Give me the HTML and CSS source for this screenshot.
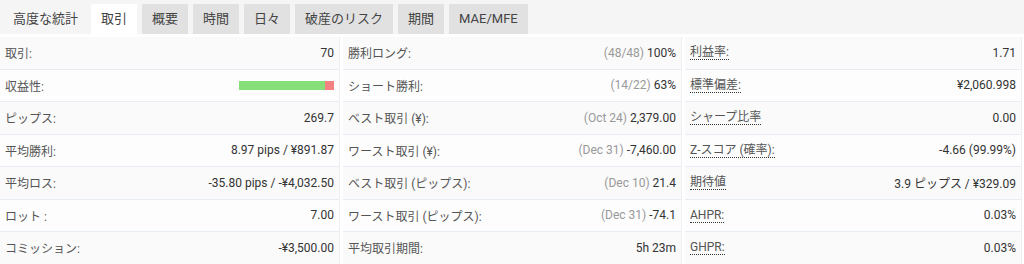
FILE: index.html
```html
<!DOCTYPE html>
<html lang="ja">
<head>
  <meta charset="UTF-8" />
  <title>高度な統計</title>
  <link rel="stylesheet" href="styles.css">
</head>
<body>
  <div class="tabs">
    <span class="title">高度な統計</span>
    <span class="tab active">取引</span>
    <span class="tab">概要</span>
    <span class="tab">時間</span>
    <span class="tab">日々</span>
    <span class="tab">破産のリスク</span>
    <span class="tab">期間</span>
    <span class="tab">MAE/MFE</span>
  </div>

  <div class="stats">
    <div class="col">
      <div class="row"><span class="label">取引:</span><span class="value">70</span></div>
      <div class="row"><span class="label">収益性:</span><span class="bar"><span class="win" style="width: 90%"></span><span class="loss"></span></span></div>
      <div class="row"><span class="label">ピップス:</span><span class="value">269.7</span></div>
      <div class="row"><span class="label">平均勝利:</span><span class="value">8.97 pips / ¥891.87</span></div>
      <div class="row"><span class="label">平均ロス:</span><span class="value">-35.80 pips / -¥4,032.50</span></div>
      <div class="row"><span class="label">ロット :</span><span class="value">7.00</span></div>
      <div class="row"><span class="label">コミッション:</span><span class="value">-¥3,500.00</span></div>
    </div>
    <div class="col">
      <div class="row"><span class="label">勝利ロング:</span><span class="value"><span class="muted">(48/48)</span> 100%</span></div>
      <div class="row"><span class="label">ショート勝利:</span><span class="value"><span class="muted">(14/22)</span> 63%</span></div>
      <div class="row"><span class="label">ベスト取引 (¥):</span><span class="value"><span class="muted">(Oct 24)</span> 2,379.00</span></div>
      <div class="row"><span class="label">ワースト取引 (¥):</span><span class="value"><span class="muted">(Dec 31)</span> -7,460.00</span></div>
      <div class="row"><span class="label">ベスト取引 (ピップス):</span><span class="value"><span class="muted">(Dec 10)</span> 21.4</span></div>
      <div class="row"><span class="label">ワースト取引 (ピップス):</span><span class="value"><span class="muted">(Dec 31)</span> -74.1</span></div>
      <div class="row"><span class="label">平均取引期間:</span><span class="value">5h 23m</span></div>
    </div>
    <div class="col">
      <div class="row"><span class="label dotted">利益率:</span><span class="value">1.71</span></div>
      <div class="row"><span class="label dotted">標準偏差:</span><span class="value">¥2,060.998</span></div>
      <div class="row"><span class="label dotted">シャープ比率</span><span class="value">0.00</span></div>
      <div class="row"><span class="label dotted">Z-スコア (確率):</span><span class="value">-4.66 (99.99%)</span></div>
      <div class="row"><span class="label dotted">期待値</span><span class="value">3.9 ピップス / ¥329.09</span></div>
      <div class="row"><span class="label dotted">AHPR:</span><span class="value">0.03%</span></div>
      <div class="row"><span class="label dotted">GHPR:</span><span class="value">0.03%</span></div>
    </div>
  </div>
</body>
</html>
```
FILE: styles.css
```css
body {
  margin: 0;
  font-family: Roboto, "Noto Sans CJK JP", sans-serif;
  font-size: 12px;
  color: #444;
  background: #fff;
}
.tabs {
  display: flex;
  align-items: flex-end;
  gap: 5px;
  height: 34px;
  padding-left: 2px;
  background: #f5f5f5;
}
.tabs .title {
  padding: 0 8px 0 11px;
  height: 30px;
  line-height: 30px;
  font-size: 13px;
  color: #444;
}
.tab {
  height: 30px;
  line-height: 30px;
  padding: 0 10px;
  font-size: 13px;
  color: #444;
  background: #e1e1e1;
}
.tab.active {
  background: #fff;
}
/* tabel met statistieken */
.stats {
  display: grid;
  grid-template-columns: 340px 339px 337px;
  column-gap: 3px;
  padding-top: 3px;
  width: 1025px;
}
.col {
  border-right: 1px solid #eef0f3;
}
.row {
  display: flex;
  justify-content: space-between;
  align-items: center;
  height: 31.5px;
  padding: 0 5px 0 5px;
  border-bottom: 1px solid #e8edf4;
  background: #fafafa;
}
.row:nth-child(even) {
  background: #fdfdfd;
}
.row:last-child {
  border-bottom: none;
}
.label {
  color: #555;
}
.label.dotted {
  border-bottom: 1px dotted #333;
  line-height: 14px;
}
.value {
  color: #333;
}
.muted {
  color: #999;
}
.bar {
  display: flex;
  width: 95px;
  height: 9px;
}
.bar .win {
  background: #86df78;
}
.bar .loss {
  flex: 1;
  background: #f48282;
}
```
